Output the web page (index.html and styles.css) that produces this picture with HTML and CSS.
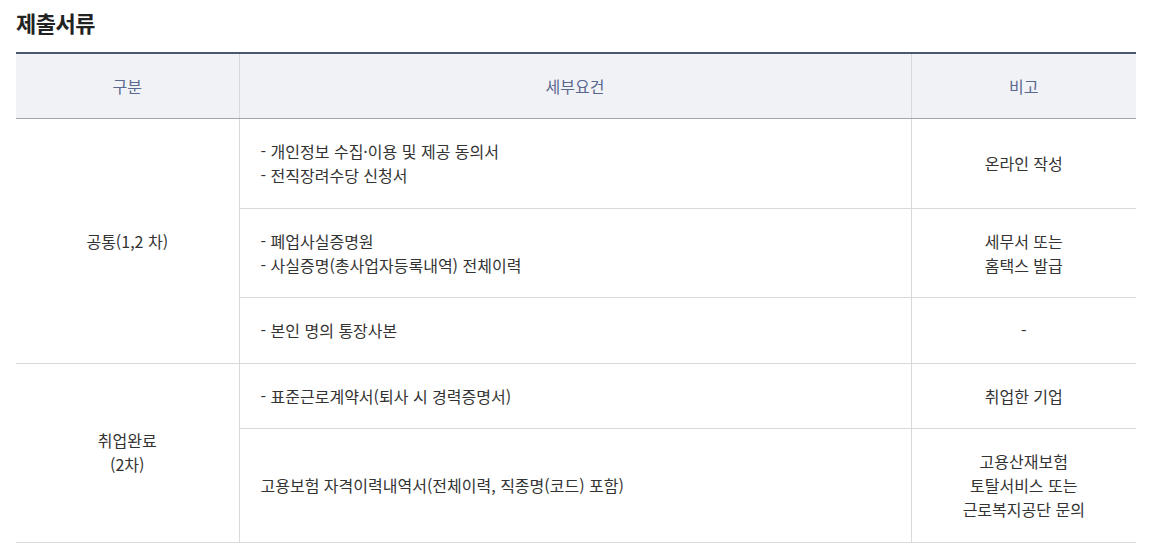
FILE: index.html
```html
<!DOCTYPE html>
<html lang="ko">
<head>
<meta charset="utf-8">
<link rel="stylesheet" href="styles.css">
</head>
<body>
<div class="wrap">
  <h2 class="title">제출서류</h2>
  <table class="docs">
    <colgroup>
      <col class="c1"><col class="c2"><col class="c3">
    </colgroup>
    <thead>
      <tr><th>구분</th><th>세부요건</th><th>비고</th></tr>
    </thead>
    <tbody>
      <tr>
        <td rowspan="3" class="center">공통(1,2 차)</td>
        <td class="left">- 개인정보 수집·이용 및 제공 동의서<br>- 전직장려수당 신청서</td>
        <td class="center">온라인 작성</td>
      </tr>
      <tr>
        <td class="left">- 폐업사실증명원<br>- 사실증명(총사업자등록내역) 전체이력</td>
        <td class="center">세무서 또는<br>홈택스 발급</td>
      </tr>
      <tr>
        <td class="left">- 본인 명의 통장사본</td>
        <td class="center">-</td>
      </tr>
      <tr>
        <td rowspan="2" class="center">취업완료<br>(2차)</td>
        <td class="left">- 표준근로계약서(퇴사 시 경력증명서)</td>
        <td class="center">취업한 기업</td>
      </tr>
      <tr>
        <td class="left">고용보험 자격이력내역서(전체이력, 직종명(코드) 포함)</td>
        <td class="center">고용산재보험<br>토탈서비스 또는<br>근로복지공단 문의</td>
      </tr>
    </tbody>
  </table>
</div>
</body>
</html>
```

FILE: styles.css
```css
html, body {
  margin: 0;
  padding: 0;
  background: #fff;
}
body {
  font-family: "Noto Sans CJK KR", "Noto Sans", sans-serif;
  color: #333;
}
.wrap {
  padding: 6px 14px 0 16px;
}
.title {
  margin: 0 0 14px 0;
  font-size: 22px;
  line-height: 32px;
  font-weight: 700;
  color: #222;
  letter-spacing: -0.5px;
}
.docs {
  width: 1120px;
  border-collapse: collapse;
  border-top: 2px solid #4c5572;
  font-size: 16px;
  line-height: 24px;
}
.c1 { width: 223px; }
.c2 { width: 672px; }
.c3 { width: 225px; }
.docs th {
  background: #f1f2f6;
  color: #5a6890;
  font-weight: 400;
  padding: 20px 10px 20px;
  border-left: 1px solid #d9d9d9;
  border-bottom: 1px solid #a5a5ad;
  text-align: center;
}
.docs td {
  padding: 20px 10px 20.5px;
  border-left: 1px solid #d9d9d9;
  border-bottom: 1px solid #d9d9d9;
  vertical-align: middle;
}
.docs th:first-child,
.docs tbody tr:first-child td:first-child,
.docs tbody tr:nth-child(4) td:first-child {
  border-left: none;
}
.docs td.left {
  text-align: left;
  padding-left: 21px;
}
.docs td.center {
  text-align: center;
}
```
